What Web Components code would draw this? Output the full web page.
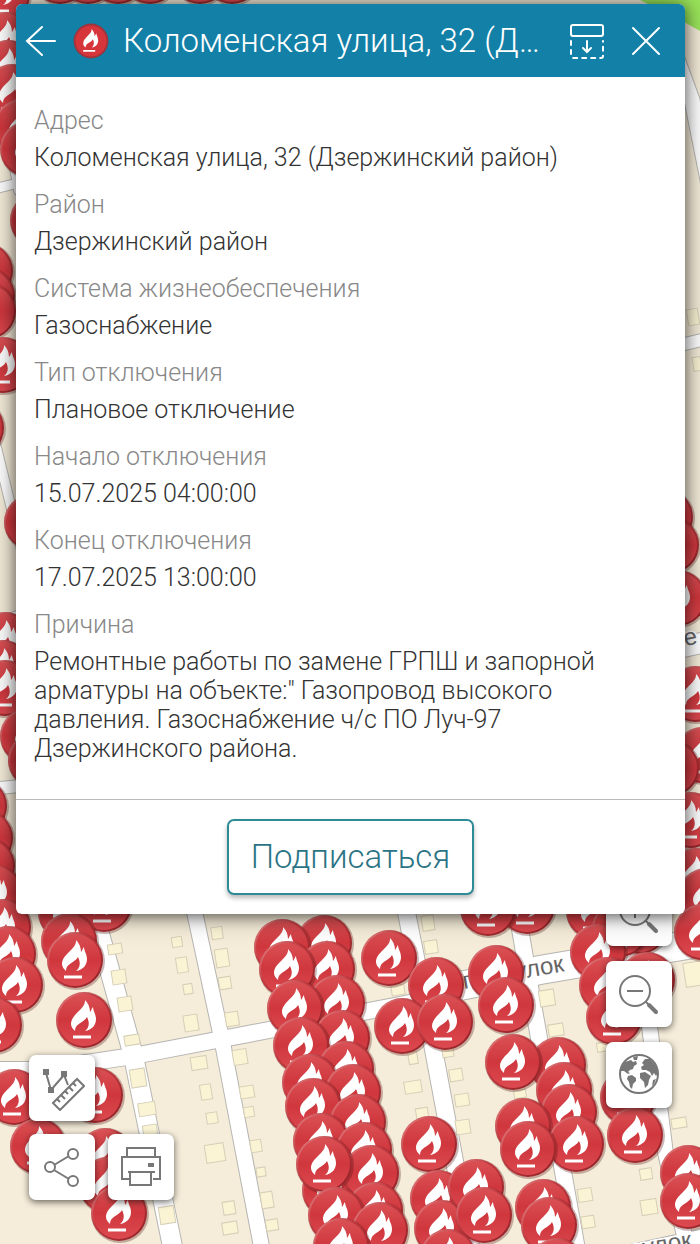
<!DOCTYPE html>
<html lang="ru">
<head>
<meta charset="utf-8">
<meta name="viewport" content="width=device-width, initial-scale=1">
<title>Карта отключений</title>
<style>
  html { height: 100%; }
  body { margin: 0; min-height: 100%; font-family: Roboto, "Noto Sans", sans-serif; font-weight: 300; color: #333; }
</style>
</head>
<body>
<outage-page></outage-page>

<template id="page-tpl">
  <style>
    :host { display: block; position: relative; min-height: 100vh; overflow: hidden; }
    main { position: relative; z-index: 2; padding: 4px 15px 0 16px; }
    .tools { position: absolute; z-index: 1; display: flex; flex-direction: column; gap: 13px; }
    .left { left: 29px; bottom: 44px; }
    .right { right: 28px; bottom: 136px; gap: 15px; }
    .row { display: flex; gap: 13px; }
  </style>
  <outage-map></outage-map>
  <main>
    <outage-card heading="Коломенская улица, 32 (Д…">
      <info-field label="Адрес">Коломенская улица, 32 (Дзержинский район)</info-field>
      <info-field label="Район">Дзержинский район</info-field>
      <info-field label="Система жизнеобеспечения">Газоснабжение</info-field>
      <info-field label="Тип отключения">Плановое отключение</info-field>
      <info-field label="Начало отключения">15.07.2025 04:00:00</info-field>
      <info-field label="Конец отключения">17.07.2025 13:00:00</info-field>
      <info-field label="Причина">Ремонтные работы по замене ГРПШ и запорной арматуры на объекте:" Газопровод высокого давления. Газоснабжение ч/с ПО Луч-97 Дзержинского района.</info-field>
    </outage-card>
  </main>
  <div class="tools left">
    <map-button label="Измерить">
      <svg viewBox="0 0 46 46" width="46" height="46" fill="none" stroke="#777" stroke-width="2">
        <path d="M7 8L12 25L25 10L29 20"/><path fill="#777" stroke="none" d="M4 4h6v6H4zM9 22h6v6H9zM22 6h6v6h-6z"/>
        <path d="M14 38L38 14L45 21L21 45Z"/><path d="M18 34l3 3M22 30l4 4M26 26l3 3M30 22l4 4M34 18l3 3"/>
      </svg>
    </map-button>
    <div class="row">
      <map-button label="Поделиться">
        <svg viewBox="0 0 46 46" width="46" height="46" fill="none" stroke="#777" stroke-width="2">
          <circle cx="11" cy="23" r="5"/><circle cx="34" cy="10" r="5"/><circle cx="34" cy="37" r="5"/><path d="M15 21L30 12M15 26L30 35"/>
        </svg>
      </map-button>
      <map-button label="Печать">
        <svg viewBox="0 0 46 46" width="46" height="46" fill="none" stroke="#777" stroke-width="2">
          <path d="M9 13V4H37V13M12 35H4V13H42V35H35M10 28H37M12 28V41H33V28"/><path fill="#777" stroke="none" d="M30 19h6v4h-6z"/>
        </svg>
      </map-button>
    </div>
  </div>
  <div class="tools right">
    <map-button label="Приблизить">
      <svg viewBox="0 0 46 46" width="46" height="46" fill="none" stroke="#777" stroke-width="2">
        <circle cx="19" cy="20" r="15"/><path d="M11 20H27M19 12V28M30 31L32 33"/><path stroke-width="4" stroke-linecap="round" d="M33 34L40 41"/>
      </svg>
    </map-button>
    <map-button label="Отдалить">
      <svg viewBox="0 0 46 46" width="46" height="46" fill="none" stroke="#777" stroke-width="2">
        <circle cx="19" cy="20" r="15"/><path d="M11 20H27M30 31L32 33"/><path stroke-width="4" stroke-linecap="round" d="M33 34L40 41"/>
      </svg>
    </map-button>
    <map-button label="Вся карта">
      <svg viewBox="0 0 46 46" width="46" height="46">
        <circle cx="23" cy="22" r="19" fill="none" stroke="#777" stroke-width="2"/>
        <path fill="#777" d="M5 15L9 10L15 8L17 10L20 9L21 12L18 14L17 17L14 18L12 20L14 21L12 22L8 19L5 19Z
          M17 5L22 4L21 8L18 8Z
          M12 24L16 23L20 26L20 29L17 32L16 37L14 35L13 30L11 27Z
          M25 15L28 13L26 11L29 7L34 7L40 14L42 21L40 24L38 21L36 24L34 20L30 18L26 18Z
          M24 21L29 20L32 22L35 24L33 28L32 33L29 36L28 30L24 26Z M37 28L40 27L38 32L36 34Z"/>
      </svg>
    </map-button>
  </div>
</template>

<template id="map-tpl">
  <style>
    :host { display: block; position: absolute; inset: 0; background: #f5ecd9; }
    svg { display: block; width: 100%; height: 100%; }
    text { font: 400 24px "Liberation Sans", sans-serif; fill: #666; stroke: #fff; stroke-width: 3px; paint-order: stroke; }
  </style>
  <svg viewBox="0 0 700 1244" preserveAspectRatio="xMidYMin slice" role="img" aria-label="Карта">
    <defs>
      <linearGradient id="red" x1="0" y1="0" x2="0" y2="1"><stop offset="0" stop-color="#da5054"/><stop offset=".5" stop-color="#cf373d"/><stop offset="1" stop-color="#dc4a50"/></linearGradient>
      <linearGradient id="rim" x1="0" y1="0" x2="1" y2="1"><stop offset="0" stop-color="#e98d8d"/><stop offset=".4" stop-color="#bf3a40"/><stop offset="1" stop-color="#8c1e22"/></linearGradient>
      <g id="pin">
        <circle r="29" cx="1" cy="1" fill="#501010" fill-opacity=".3"/>
        <circle r="28" fill="url(#rim)"/>
        <circle r="26" fill="url(#red)"/>
        <path fill="#fff" d="M1-20C2-11-13-6-13 4C-13 7-11 9-9 11C-9 3 0 3 3-3C6 3 5 8 1 11C8 10 12 5 12-1C12-6 9-9 9-13C8-12 7-9 6-8C6-13 4-17 1-20Z"/>
        <path fill="#fff" d="M-11 15.500H7V18.500H-11Z"/>
      </g>
    </defs>
    <g fill="none" stroke-linecap="round" id="roads"></g>
    <path fill="#9be65b" d="M640 0H700V31L684 22L650 5Z"/>
    <g id="houses" fill="#faf3d4" stroke="#d6cfb8"></g>
    <text transform="translate(464 989) rotate(-10)">переулок</text>
    <text transform="translate(592 1265) rotate(-10)">переулок</text>
    <text transform="translate(685 646) rotate(-10)">е</text>
    <g id="pins"></g>
  </svg>
</template>

<template id="card-tpl">
  <style>
    :host { display: block; background: #fff; border-radius: 6px; box-shadow: 0 2px 14px rgba(0,0,0,.5), 0 0 30px rgba(0,0,0,.35); overflow: hidden; }
    header { display: flex; align-items: center; height: 73px; box-sizing: border-box; padding: 0 22px 0 8px; background: #1280a7; color: #fff; }
    header button { flex: none; display: block; margin: 0; padding: 0; border: 0; background: none; color: inherit; cursor: pointer; }
    svg { display: block; }
    .badge { flex: none; margin: 0 14px 0 15px; }
    h1 { flex: 1; min-width: 0; margin: 0 16px 0 0; font-size: 33px; line-height: 40px; font-weight: 300; white-space: nowrap; overflow: hidden; text-overflow: ellipsis; }
    header .dock { margin-right: 24px; }
    section { padding: 29px 18px 36px; display: flex; flex-direction: column; gap: 18px; }
    footer { display: flex; justify-content: center; padding: 19px; border-top: 1px solid #bbb; }
    .sub { font: inherit; font-size: 33px; line-height: 40px; color: #2b7485; background: #fff; border: 2px solid #2d8a97; border-radius: 7px; padding: 16px 22px; box-shadow: 0 3px 5px rgba(0,0,0,.28); cursor: pointer; }
  </style>
  <header>
    <button type="button" aria-label="Назад">
      <svg width="34" height="36" viewBox="0 0 34 36" fill="none" stroke="#fff" stroke-width="2" stroke-linecap="round"><path d="M3 18H31M18 4L3 18L18 32"/></svg>
    </button>
    <svg class="badge" width="36" height="36" viewBox="-30 -30 60 60" aria-hidden="true">
      <circle r="29" fill="#a0333c"/><circle r="26" fill="#d6353c"/>
      <path fill="#fff" d="M1-20C2-11-13-6-13 4C-13 7-11 9-9 11C-9 3 0 3 3-3C6 3 5 8 1 11C8 10 12 5 12-1C12-6 9-9 9-13C8-12 7-9 6-8C6-13 4-17 1-20Z"/><path fill="#fff" d="M-13 15H7V18H-13Z"/>
    </svg>
    <h1></h1>
    <button class="dock" type="button" aria-label="Свернуть вниз">
      <svg width="36" height="36" viewBox="0 0 36 36" fill="none" stroke="#fff" stroke-width="2" stroke-linecap="round"><rect x="2" y="2" width="32" height="11" rx="2"/><path stroke-dasharray="4 5" d="M2 18V33Q2 35 4 35H32Q34 35 34 33V18"/><path d="M18 18V29M14 25L18 29L22 25"/></svg>
    </button>
    <button type="button" aria-label="Закрыть">
      <svg width="34" height="34" viewBox="0 0 34 34" fill="none" stroke="#fff" stroke-width="2" stroke-linecap="round"><path d="M4 4L30 30M30 4L4 30"/></svg>
    </button>
  </header>
  <section><slot></slot></section>
  <footer><button class="sub" type="button">Подписаться</button></footer>
</template>

<template id="field-tpl">
  <style>
    :host { display: block; font-size: 25px; line-height: 29px; }
    dl, dd, dt { margin: 0; }
    dt { color: #888; margin-bottom: 8px; }
    dd { color: #333; }
  </style>
  <dl><dt></dt><dd><slot></slot></dd></dl>
</template>

<template id="button-tpl">
  <style>
    :host { display: block; }
    button { display: grid; place-items: center; width: 66px; height: 66px; margin: 0; padding: 0; border: 0; border-radius: 7px; background: #fff; box-shadow: 0 2px 7px rgba(0,0,0,.6); cursor: pointer; }
    ::slotted(svg) { display: block; }
  </style>
  <button type="button"><slot></slot></button>
</template>

<script>
  const stamp = (host, id) => {
    const root = host.attachShadow({ mode: "open" });
    root.append(document.getElementById(id).content.cloneNode(true));
    return root;
  };

  /* Each road: its points, then its width. */
  const ROADS = [
    [[60,760],[94,914],[133,1054],[172,1244],19],
    [[160,760],[195,914],[222,1040],[261,1244],15],
    [[404,900],[428,1020],[470,1244],17],
    [[515,900],[534,1010],[576,1244],16],
    [[640,950],[665,1150],[690,1260],15],
    [[-10,1070],[40,1070],[133,1056],[222,1039],[405,1004],[440,996],16],
    [[440,990],[540,970],[710,941],28],
    [[590,1266],[710,1240],24],
    [[-10,190],[30,180],9],[[-10,20],[20,190],12],[[-20,380],[24,560],9],[[-10,625],[20,614],8],
    [[-10,789],[30,785],12],[[670,40],[692,100],[720,240],15],[[660,350],[710,338],12],[[670,650],[710,641],20]
  ];
  /* x, y, width, height of each building */
  const HOUSES = [
    115,949,14,10, 177,942,10,10, 182,965,11,15, 188,989,9,10, 191,1023,14,16, 119,977,14,14, 125,1004,14,14,
    132,1040,15,10, 138,1078,15,18, 147,1109,17,13, 199,1063,16,13, 206,1092,11,15, 212,1118,11,11, 215,1153,19,18,
    150,1130,14,10, 167,1215,15,17, 229,1208,12,13, 230,1228,15,12, 217,933,11,12, 222,958,13,18, 225,983,12,12,
    232,1019,13,14, 240,1057,14,15, 247,1092,14,12, 249,1112,10,10, 256,1146,11,12, 261,1172,9,9, 267,1200,12,16,
    272,1225,12,11, 428,923,12,15, 431,947,13,13, 398,990,13,10, 413,1058,9,12, 413,1087,17,12, 422,1113,12,10,
    448,1053,11,8, 456,1075,13,12, 462,1100,14,12, 463,1127,14,14, 547,998,15,16, 556,1030,15,12,
    679,1123,15,10, 646,1174,12,11, 585,1195,14,13, 649,1207,16,15, 588,1222,13,12, 694,974,19,24,
    603,1047,12,9, 520,1094,12,8, 693,317,11,16, 697,364,8,14
  ];
  /* x, y of each outage, drawn in this order */
  const PINS = [
    2,-6, 60,-24, 88,-24, 118,-24, 150,-24, 200,-24, 232,-24, 6,40, 8,68, 12,92, 22,127, 28,149, 38,220, -15,271, -13,296, -12,311, 3,365,
    -24,428, 32,522, 5,640, 3,668, 5,688, 28,736, 36,760, -21,806, -15,838, -13,866, -5,893,
    665,517, 671,545, 678,598, 695,694, 702,755, 671,768, 690,820, 695,876,
    3,927, 8,954, 15,985, -6,1025, 66,912, 104,904, 69,941, 75,960, 84,1020, 95,1095, 14,1097, 38,1146, 105,1156, 107,1185, 119,1213,
    324,943, 282,947, 327,969, 287,969, 337,1003, 295,1008, 342,1038, 301,1045, 346,1069, 310,1082, 353,1092, 313,1106,
    358,1122, 321,1141, 364,1150, 330,1190, 371,1173, 324,1164, 375,1210, 336,1215, 380,1230, 341,1246,
    389,958, 436,985, 402,1026, 445,1022, 429,1144, 438,1198, 442,1228, 476,1187, 484,1215, 448,1257,
    527,906, 488,908, 594,911, 640,926, 620,929, 598,952, 647,980, 607,985, 614,1017, 496,973, 506,1005,
    558,1065, 513,1062, 564,1090, 569,1112, 523,1126, 576,1144, 528,1149, 628,1097, 635,1135,
    543,1207, 549,1225, 557,1266, 688,1173, 688,1201, 706,896, 702,932
  ];
  const group = (a, n) => a.flatMap((_, i) => i % n ? [] : [a.slice(i, i + n)]);

  customElements.define("outage-map", class extends HTMLElement {
    constructor() {
      super();
      const root = stamp(this, "map-tpl");
      const line = (r, extra, color) =>
        `<polyline points="${r.slice(0, -1).join(" ")}" stroke="${color}" stroke-width="${r.at(-1) + extra}"/>`;
      root.getElementById("roads").innerHTML =
        ROADS.map(r => line(r, 2, "#b5b5b2")).join("") + ROADS.map(r => line(r, 0, "#fff")).join("");
      root.getElementById("houses").innerHTML = group(HOUSES, 4).map(([x, y, w, h]) =>
        `<rect x="${-w / 2}" y="${-h / 2}" width="${w}" height="${h}" transform="translate(${x} ${y}) rotate(-9)"/>`).join("");
      root.getElementById("pins").innerHTML = group(PINS, 2).map(([x, y]) => `<use href="#pin" x="${x}" y="${y}"/>`).join("");
    }
  });

  customElements.define("map-button", class extends HTMLElement {
    constructor() { super(); stamp(this, "button-tpl"); }
    connectedCallback() { this.shadowRoot.querySelector("button").setAttribute("aria-label", this.getAttribute("label")); }
  });

  customElements.define("info-field", class extends HTMLElement {
    constructor() { super(); stamp(this, "field-tpl"); }
    connectedCallback() { this.shadowRoot.querySelector("dt").textContent = this.getAttribute("label"); }
  });

  customElements.define("outage-card", class extends HTMLElement {
    constructor() { super(); stamp(this, "card-tpl"); }
    connectedCallback() { this.shadowRoot.querySelector("h1").textContent = this.getAttribute("heading"); }
  });

  customElements.define("outage-page", class extends HTMLElement {
    constructor() { super(); stamp(this, "page-tpl"); }
  });
</script>
</body>
</html>
